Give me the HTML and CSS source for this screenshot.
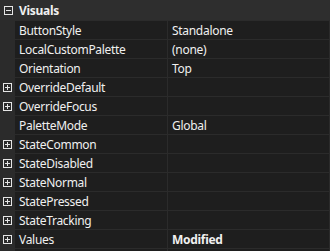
FILE: index.html
```html
<!DOCTYPE html>
<html lang="en">
<head>
    <meta charset="UTF-8">
    <title>Property Grid</title>
    <link rel="stylesheet" href="styles.css">
</head>
<body>

    <div class="grid">
        <div class="category">
            <span class="toggle">
                <svg width="9" height="9" viewBox="0 0 9 9"><rect x="0.5" y="0.5" width="8" height="8" fill="none" stroke="#e6e6e6"/><path d="M2 4.5h5" stroke="#e6e6e6"/></svg>
            </span>
            <span class="category-name">Visuals</span>
        </div>

        <div class="gutter"></div><div class="name">ButtonStyle</div><div class="value">Standalone</div>
        <div class="gutter"></div><div class="name">LocalCustomPalette</div><div class="value">(none)</div>
        <div class="gutter"></div><div class="name">Orientation</div><div class="value">Top</div>
        <div class="gutter"><svg width="9" height="9" viewBox="0 0 9 9"><rect x="0.5" y="0.5" width="8" height="8" fill="none" stroke="#e6e6e6"/><path d="M2 4.5h5M4.5 2v5" stroke="#e6e6e6"/></svg></div><div class="name">OverrideDefault</div><div class="value"></div>
        <div class="gutter"><svg width="9" height="9" viewBox="0 0 9 9"><rect x="0.5" y="0.5" width="8" height="8" fill="none" stroke="#e6e6e6"/><path d="M2 4.5h5M4.5 2v5" stroke="#e6e6e6"/></svg></div><div class="name">OverrideFocus</div><div class="value"></div>
        <div class="gutter"></div><div class="name">PaletteMode</div><div class="value">Global</div>
        <div class="gutter"><svg width="9" height="9" viewBox="0 0 9 9"><rect x="0.5" y="0.5" width="8" height="8" fill="none" stroke="#e6e6e6"/><path d="M2 4.5h5M4.5 2v5" stroke="#e6e6e6"/></svg></div><div class="name">StateCommon</div><div class="value"></div>
        <div class="gutter"><svg width="9" height="9" viewBox="0 0 9 9"><rect x="0.5" y="0.5" width="8" height="8" fill="none" stroke="#e6e6e6"/><path d="M2 4.5h5M4.5 2v5" stroke="#e6e6e6"/></svg></div><div class="name">StateDisabled</div><div class="value"></div>
        <div class="gutter"><svg width="9" height="9" viewBox="0 0 9 9"><rect x="0.5" y="0.5" width="8" height="8" fill="none" stroke="#e6e6e6"/><path d="M2 4.5h5M4.5 2v5" stroke="#e6e6e6"/></svg></div><div class="name">StateNormal</div><div class="value"></div>
        <div class="gutter"><svg width="9" height="9" viewBox="0 0 9 9"><rect x="0.5" y="0.5" width="8" height="8" fill="none" stroke="#e6e6e6"/><path d="M2 4.5h5M4.5 2v5" stroke="#e6e6e6"/></svg></div><div class="name">StatePressed</div><div class="value"></div>
        <div class="gutter"><svg width="9" height="9" viewBox="0 0 9 9"><rect x="0.5" y="0.5" width="8" height="8" fill="none" stroke="#e6e6e6"/><path d="M2 4.5h5M4.5 2v5" stroke="#e6e6e6"/></svg></div><div class="name">StateTracking</div><div class="value"></div>
        <div class="gutter"><svg width="9" height="9" viewBox="0 0 9 9"><rect x="0.5" y="0.5" width="8" height="8" fill="none" stroke="#e6e6e6"/><path d="M2 4.5h5M4.5 2v5" stroke="#e6e6e6"/></svg></div><div class="name">Values</div><div class="value bold">Modified</div>
        <div class="gutter"></div><div class="name"></div><div class="value"></div>
    </div>

</body>
</html>
```

FILE: styles.css
```css
body {
    margin: 0;
    background: #2b2b2b;
    font-family: "Noto Sans", "Open Sans", sans-serif;
    font-size: 12px;
    letter-spacing: -0.3px;
    color: #f0f0f0;
}
.grid {
    width: 330px;
    height: 251px;
    overflow: hidden;
    display: grid;
    grid-template-columns: 14px 152px 161px;
    grid-template-rows: 20px;
    grid-auto-rows: 18px;
    column-gap: 1px;
    row-gap: 1px;
    padding-right: 1px;
    box-sizing: border-box;
    background: #2b2b2b;
}
.category {
    grid-column: 1 / -1;
    margin-right: -1px;
    background: #2e2e2e;
    display: flex;
    align-items: center;
    font-weight: bold;
}
.toggle {
    width: 15px;
    display: flex;
    justify-content: center;
    padding-left: 1px;
    box-sizing: border-box;
}
.toggle svg {
    display: block;
}
.category-name {
    padding-left: 4px;
}
.gutter {
    display: flex;
    align-items: center;
    padding-left: 3px;
}
.gutter svg {
    display: block;
}
.name, .value {
    background: #1e1e1e;
    display: flex;
    align-items: center;
    padding-left: 4px;
    white-space: nowrap;
    overflow: hidden;
}
.bold {
    font-weight: bold;
}
```
